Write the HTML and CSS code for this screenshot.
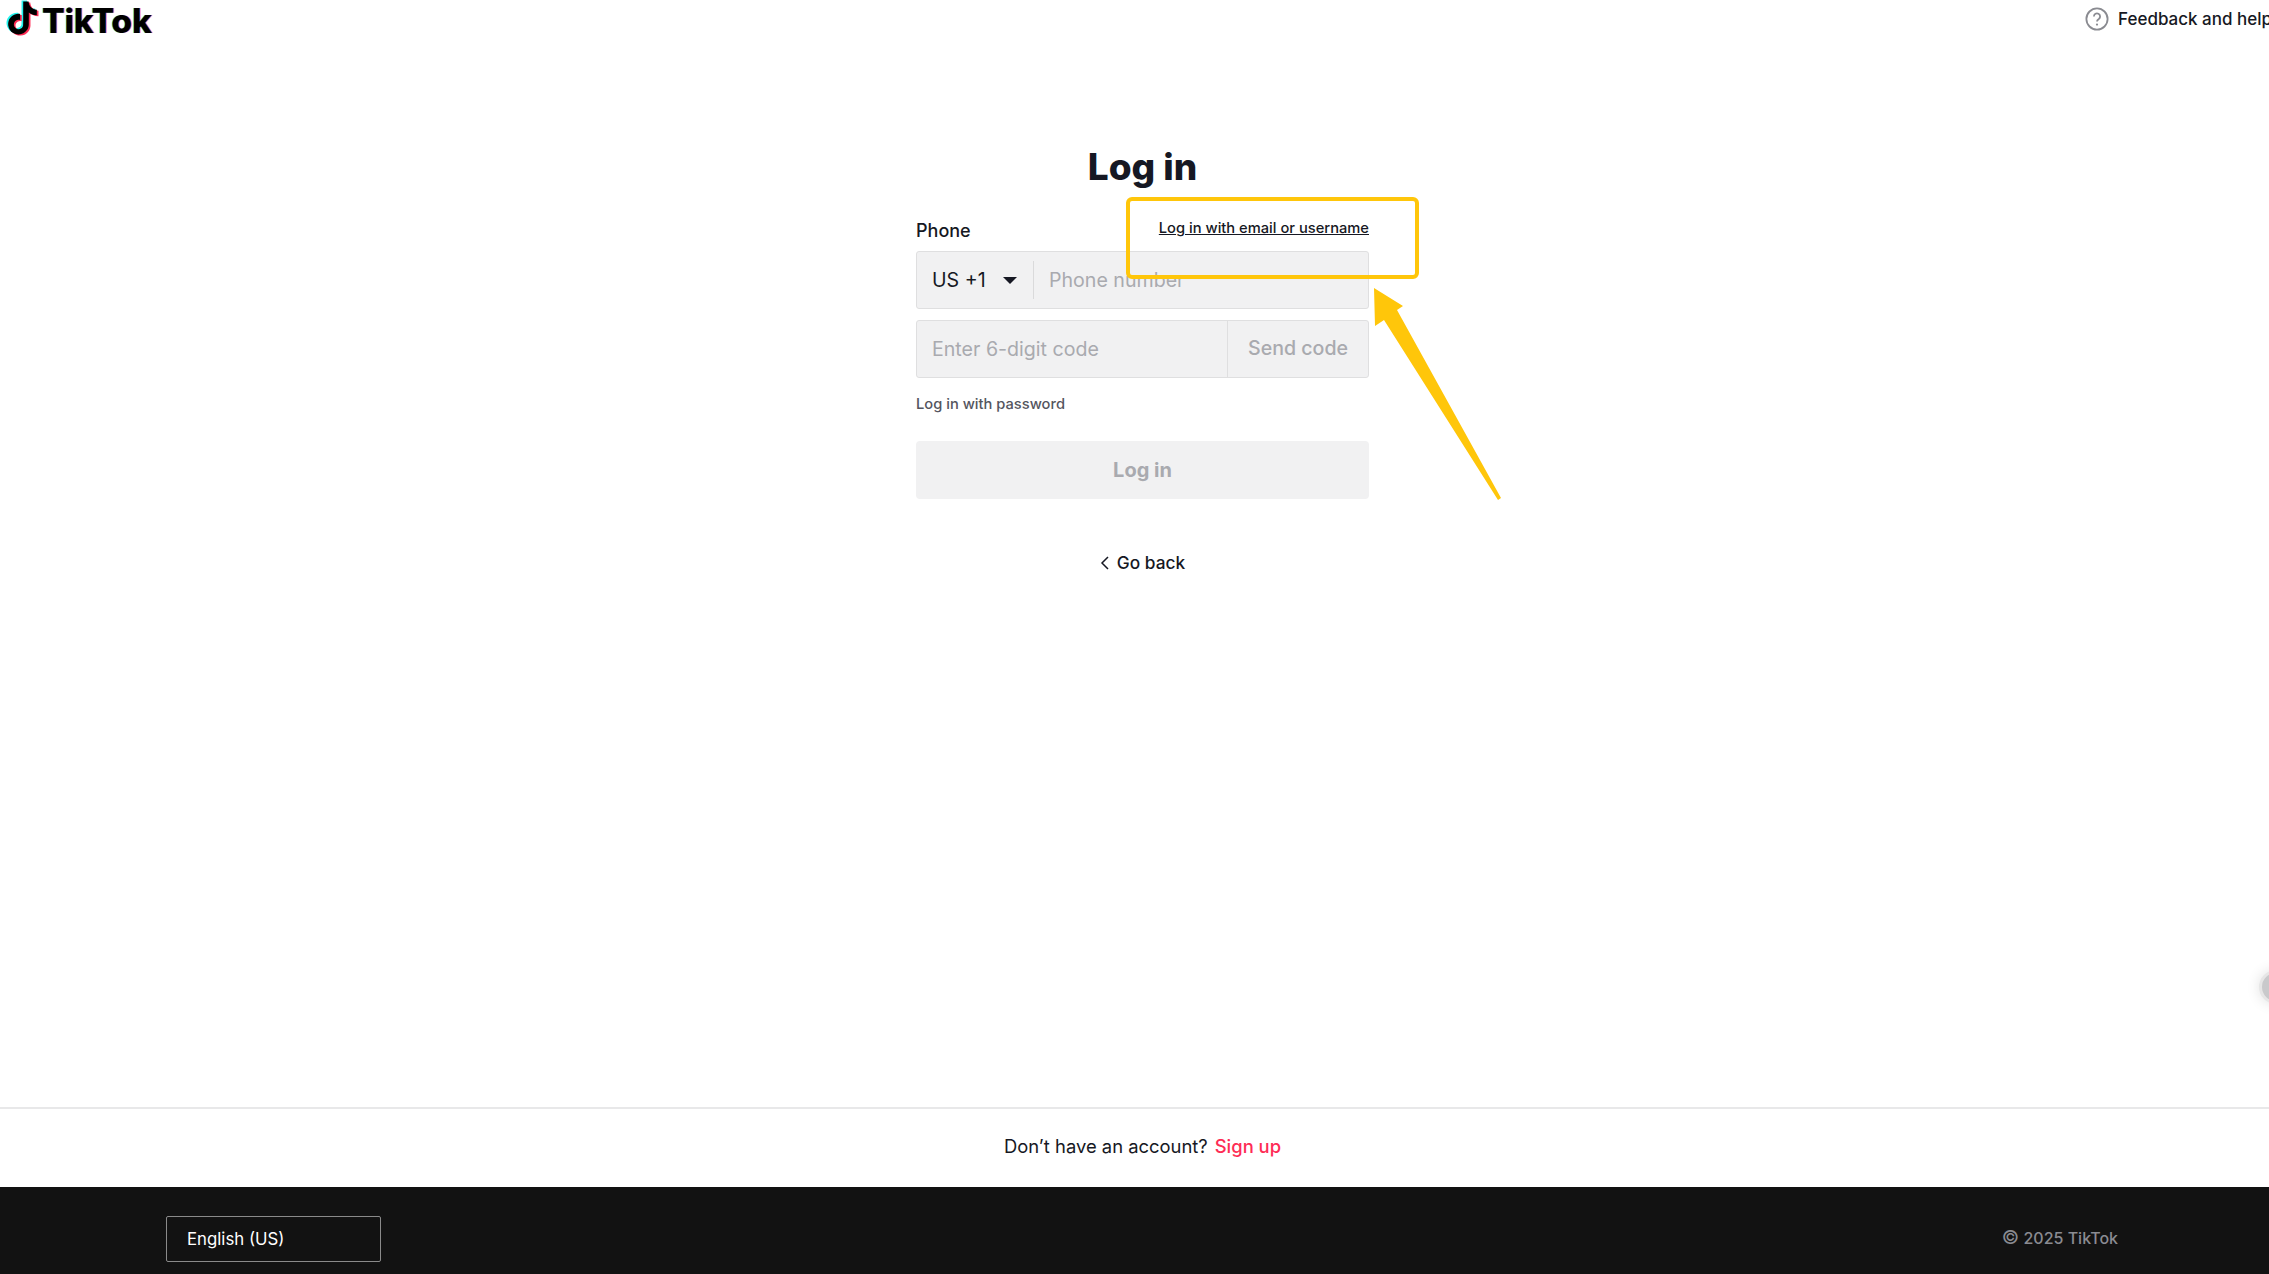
FILE: index.html
```html
<!DOCTYPE html>
<html lang="en">
<head>
    <meta charset="UTF-8">
    <title>Log in | TikTok</title>
    <link rel="stylesheet" href="styles.css">
</head>
<body>
    <div class="page">
        <header class="top">
            <a class="logo">
                <svg class="logo-note" viewBox="0 0 24 24" width="33" height="36">
                    <path class="note-cyan" transform="translate(-1.2 -.8)" d="M12.525.02c1.31-.02 2.61-.01 3.91-.02.08 1.53.63 3.09 1.75 4.17 1.12 1.11 2.7 1.62 4.24 1.79v4.03c-1.44-.05-2.89-.35-4.2-.97-.57-.26-1.1-.59-1.62-.93-.01 2.92.01 5.84-.02 8.75-.08 1.4-.54 2.79-1.35 3.94-1.31 1.92-3.58 3.17-5.91 3.21-1.43.08-2.86-.31-4.08-1.03-2.02-1.19-3.44-3.37-3.65-5.71-.02-.5-.03-1-.01-1.49.18-1.9 1.12-3.72 2.58-4.96 1.66-1.44 3.98-2.13 6.15-1.72.02 1.48-.04 2.96-.04 4.44-.99-.32-2.15-.23-3.02.37-.63.41-1.11 1.04-1.36 1.75-.21.51-.15 1.07-.14 1.61.24 1.64 1.82 3.02 3.5 2.87 1.12-.01 2.19-.66 2.77-1.61.19-.33.4-.67.41-1.06.1-1.79.06-3.57.07-5.36.01-4.03-.01-8.05.02-12.07z"/>
                    <path class="note-red" transform="translate(1.2 .8)" d="M12.525.02c1.31-.02 2.61-.01 3.91-.02.08 1.53.63 3.09 1.75 4.17 1.12 1.11 2.7 1.62 4.24 1.79v4.03c-1.44-.05-2.89-.35-4.2-.97-.57-.26-1.1-.59-1.62-.93-.01 2.92.01 5.84-.02 8.75-.08 1.4-.54 2.79-1.35 3.94-1.31 1.92-3.58 3.17-5.91 3.21-1.43.08-2.86-.31-4.08-1.03-2.02-1.19-3.44-3.37-3.65-5.71-.02-.5-.03-1-.01-1.49.18-1.9 1.12-3.72 2.58-4.96 1.66-1.44 3.98-2.13 6.15-1.72.02 1.48-.04 2.96-.04 4.44-.99-.32-2.15-.23-3.02.37-.63.41-1.11 1.04-1.36 1.75-.21.51-.15 1.07-.14 1.61.24 1.64 1.82 3.02 3.5 2.87 1.12-.01 2.19-.66 2.77-1.61.19-.33.4-.67.41-1.06.1-1.79.06-3.57.07-5.36.01-4.03-.01-8.05.02-12.07z"/>
                    <path d="M12.525.02c1.31-.02 2.61-.01 3.91-.02.08 1.53.63 3.09 1.75 4.17 1.12 1.11 2.7 1.62 4.24 1.79v4.03c-1.44-.05-2.89-.35-4.2-.97-.57-.26-1.1-.59-1.62-.93-.01 2.92.01 5.84-.02 8.75-.08 1.4-.54 2.79-1.35 3.94-1.31 1.92-3.58 3.17-5.91 3.21-1.43.08-2.86-.31-4.08-1.03-2.02-1.19-3.44-3.37-3.65-5.71-.02-.5-.03-1-.01-1.49.18-1.9 1.12-3.72 2.58-4.96 1.66-1.44 3.98-2.13 6.15-1.72.02 1.48-.04 2.96-.04 4.44-.99-.32-2.15-.23-3.02.37-.63.41-1.11 1.04-1.36 1.75-.21.51-.15 1.07-.14 1.61.24 1.64 1.82 3.02 3.5 2.87 1.12-.01 2.19-.66 2.77-1.61.19-.33.4-.67.41-1.06.1-1.79.06-3.57.07-5.36.01-4.03-.01-8.05.02-12.07z"/>
                </svg>
                <span class="logo-text">TikTok</span>
            </a>
            <a class="help">
                <svg class="help-icon" viewBox="0 0 24 24" width="24" height="24">
                    <circle cx="12" cy="12" r="10.6"/>
                    <path d="M8.9 9.4a3.1 3.1 0 1 1 4.9 2.6c-1.1.7-1.8 1.3-1.8 2.5"/>
                    <circle class="help-dot" cx="12" cy="17.6" r="1.1"/>
                </svg>
                <span>Feedback and help</span>
            </a>
        </header>

        <main class="main">
            <h1>Log in</h1>
            <div class="form">
                <div class="label-row">
                    <span class="label">Phone</span>
                    <a class="switch-link">Log in with email or username</a>
                </div>
                <div class="field phone-field">
                    <div class="country">
                        <span>US +1</span>
                        <i class="caret"></i>
                    </div>
                    <span class="placeholder">Phone number</span>
                </div>
                <div class="field code-field">
                    <span class="placeholder code-input">Enter 6-digit code</span>
                    <span class="send-code">Send code</span>
                </div>
                <a class="password-link">Log in with password</a>
                <button class="submit" disabled>Log in</button>
                <a class="go-back">
                    <svg viewBox="0 0 10 16" width="10" height="16"><path d="M8 2 2 8l6 6"/></svg>
                    <span>Go back</span>
                </a>
            </div>
        </main>

        <div class="signup">
            Don’t have an account? <a class="signup-link">Sign up</a>
        </div>

        <footer class="footer">
            <div class="language">English (US)</div>
            <div class="copyright"><span class="copy-mark">©</span> 2025 TikTok</div>
        </footer>

        <div class="float-btn"></div>

        <!-- yellow note drawn on top of the screenshot -->
        <div class="note-box"></div>
        <svg class="note-arrow" viewBox="0 0 140 225" width="140" height="225">
            <polygon points="2,0 31,18 25,22 129,210 126,212 12,32 3,38"/>
        </svg>
    </div>
</body>
</html>
```

FILE: styles.css
```css
* {
    box-sizing: border-box;
}
body {
    margin: 0;
    background: #fff;
    font-family: Inter, "Noto Sans", sans-serif;
    color: #161823;
}
.page {
    position: relative;
    display: flex;
    flex-direction: column;
    width: 2269px;
    height: 1274px;
    overflow: hidden;
}

/* header */
.top {
    display: flex;
    justify-content: space-between;
    height: 60px;
    padding-left: 6px;
}
.logo {
    display: flex;
    align-items: flex-start;
    gap: 3px;
    height: 36px;
}
.logo-note {
    fill: #000;
}
.note-cyan {
    fill: #25f4ee;
}
.note-red {
    fill: #fe2c55;
}
.logo-text {
    margin-top: 2px;
    font-size: 33.5px;
    font-weight: 800;
    line-height: 38px;
    letter-spacing: -.2px;
    color: #000;
    text-shadow: -1px 0 0 rgba(37, 244, 238, .6), 1px 0 0 rgba(254, 44, 85, .6);
}
.help {
    display: flex;
    align-items: center;
    gap: 9px;
    flex-shrink: 0;
    width: 184px;
    height: 38px;
    white-space: nowrap;
    font-size: 17px;
    font-weight: 500;
}
.help-icon {
    flex-shrink: 0;
    fill: none;
    stroke: #8a8b91;
    stroke-width: 1.8;
}
.help-icon .help-dot {
    fill: #8a8b91;
    stroke: none;
}

/* login form */
.main {
    flex: 1;
    display: flex;
    flex-direction: column;
    align-items: center;
    padding-left: 16px;
}
h1 {
    margin: 81px 0 0;
    font-size: 37px;
    font-weight: 800;
    line-height: 52px;
}
.form {
    width: 453px;
    margin-top: 18px;
}
.label-row {
    display: flex;
    justify-content: space-between;
    align-items: center;
    height: 40px;
}
.label {
    font-size: 18px;
    font-weight: 500;
    margin-top: -2px;
}
.switch-link {
    font-size: 14.7px;
    font-weight: 500;
    text-decoration: underline;
    color: #161823;
    margin-top: -7px;
}
.field {
    display: flex;
    height: 58px;
    background: #f1f1f2;
    border: 1px solid #dfdfe0;
    border-radius: 3px;
    font-size: 19.6px;
}
.phone-field {
    align-items: center;
}
.country {
    display: flex;
    align-items: center;
    justify-content: space-between;
    width: 117px;
    height: 38px;
    padding: 0 16px 0 15px;
    border-right: 1px solid #dadadb;
}
.caret {
    width: 0;
    height: 0;
    border-left: 7px solid transparent;
    border-right: 7px solid transparent;
    border-top: 7px solid #161823;
}
.placeholder {
    color: #a9aaaf;
}
.phone-field .placeholder {
    margin-left: 15px;
}
.code-field {
    margin-top: 11px;
}
.code-input {
    display: flex;
    align-items: center;
    width: 311px;
    padding-left: 15px;
    border-right: 1px solid #dfdfe0;
}
.send-code {
    flex: 1;
    display: flex;
    align-items: center;
    justify-content: center;
    padding-bottom: 2px;
    font-weight: 500;
    color: #a9aaaf;
}
.password-link {
    display: block;
    margin-top: 17px;
    font-size: 14.7px;
    font-weight: 500;
    line-height: 18px;
    color: #54555e;
}
.submit {
    display: block;
    width: 100%;
    height: 58px;
    margin-top: 28px;
    background: #f1f1f2;
    border: none;
    border-radius: 4px;
    font-family: inherit;
    font-size: 20px;
    font-weight: 700;
    color: #a9aaaf;
}
.go-back {
    display: flex;
    align-items: center;
    justify-content: center;
    gap: 7px;
    margin-top: 53px;
    font-size: 17.3px;
    font-weight: 500;
    line-height: 22px;
}
.go-back svg {
    fill: none;
    stroke: #161823;
    stroke-width: 1.5;
}

/* bottom */
.signup {
    display: flex;
    align-items: center;
    justify-content: center;
    gap: 7px;
    height: 80px;
    padding: 0 0 5px 16px;
    border-top: 2px solid #e8e8e9;
    font-size: 18.4px;
}
.signup-link {
    font-weight: 500;
    color: #fe2c55;
}
.footer {
    display: flex;
    align-items: flex-start;
    justify-content: space-between;
    height: 87px;
    padding: 29px 151px 0 166px;
    background: #121212;
}
.language {
    display: flex;
    align-items: center;
    width: 215px;
    height: 46px;
    padding-left: 20px;
    border: 1px solid #8a8a8a;
    border-radius: 2px;
    font-size: 16.8px;
    color: #fff;
}
.copyright {
    margin-top: 11px;
    font-size: 16px;
    font-weight: 500;
    line-height: 22px;
    color: #8a8b91;
}
.copy-mark {
    font-size: 19px;
    font-weight: 400;
    line-height: 1;
}

/* things that sit over the page */
.float-btn {
    position: absolute;
    left: 2259px;
    top: 970px;
    width: 34px;
    height: 34px;
    border-radius: 50%;
    background: #c9c9cb;
    border: 3px solid #e6e6e6;
    box-shadow: 0 0 14px rgba(0, 0, 0, .12);
}
.note-box {
    position: absolute;
    left: 1126px;
    top: 197px;
    width: 293px;
    height: 82px;
    border: 4px solid #ffc60a;
    border-radius: 6px;
}
.note-arrow {
    position: absolute;
    left: 1372px;
    top: 288px;
    fill: #ffc60a;
}
```
